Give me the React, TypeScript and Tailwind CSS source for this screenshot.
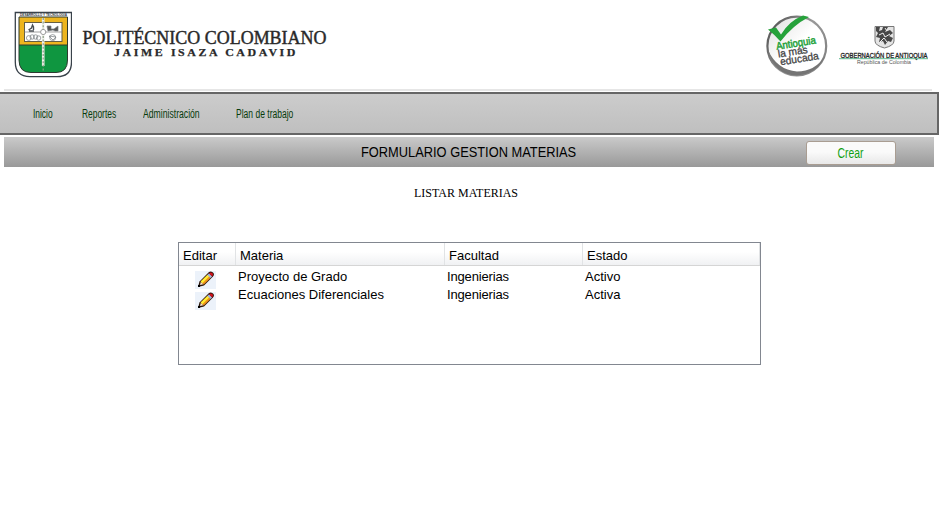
import React from "react";

function Shield() {
  return (
    <svg width="58" height="68" viewBox="14 11 58 68" className="block">
      <path d="M15.3 12.5H71.5V62Q71.5 76.6 57 76.6H30Q15.3 76.6 15.3 62Z" fill="#fff" stroke="#39424a" strokeWidth="1.3" />
      <path d="M19 17H67.5V45H19Z" fill="#edb51f" />
      <path d="M19 45H67.5V60Q67.5 72.5 56 72.5H31Q19 72.5 19 60Z" fill="#0f9640" />
      <path d="M19 17H67.5V60Q67.5 72.5 56 72.5H31Q19 72.5 19 60ZM19 45H67.5" fill="none" stroke="#2d3a30" strokeWidth="1" />
      <rect x="24.5" y="22.5" width="37.5" height="19" fill="#fff" stroke="#655f45" />
      <path d="M24.5 32H62" stroke="#888" strokeWidth="0.8" />
      <text x="20" y="16.4" fontSize="3.6" textLength="47" lengthAdjust="spacingAndGlyphs" fontWeight="bold" fill="#34383c" fontFamily="Liberation Sans, sans-serif">DESARROLLO Y TECNOLOGIA</text>
      <g fill="none" stroke="#777c80" strokeWidth="0.7">
        <path d="M28.5 30l3-2 1-3 1 2v3M29 31h5" stroke="#4a4f54" strokeWidth="1.4" />
        <path d="M47 26h4v3h3l4-3v5h-3l-2-1-5 1z" fill="#555" />
        <circle cx="28.8" cy="38" r="2.4" />
        <circle cx="32.2" cy="37" r="2.2" />
        <circle cx="35.6" cy="37" r="2.2" />
        <circle cx="38.6" cy="38" r="2.2" />
        <circle cx="52.7" cy="37.6" r="3" />
        <path d="M49 36l7 1-3 3z" />
      </g>
      <path d="M43.2 18V66" stroke="#eef1e8" strokeWidth="2.6" />
      <path d="M43.2 18V71" stroke="#8a9b86" strokeWidth="1.2" strokeDasharray="2 1.6" />
      <circle cx="43.2" cy="32" r="2.6" fill="#fff" stroke="#888" strokeWidth="0.8" />
    </svg>
  );
}

function Antioquia() {
  return (
    <svg width="70" height="68" viewBox="762 12 70 68" className="block">
      <defs>
        <linearGradient id="ring" x1="0" y1="0" x2="1" y2="0.6">
          <stop offset="0" stopColor="#4a4a4a" />
          <stop offset="0.6" stopColor="#999" />
          <stop offset="1" stopColor="#858585" />
        </linearGradient>
        <linearGradient id="face" x1="0" y1="0" x2="1" y2="1">
          <stop offset="0" stopColor="#dedede" />
          <stop offset="0.5" stopColor="#fff" />
        </linearGradient>
      </defs>
      <circle cx="796.8" cy="46" r="29.4" fill="url(#face)" stroke="url(#ring)" strokeWidth="2.2" />
      <path d="M768 50Q774 75 797 75.5Q817 74 825 56Q815 71.5 797 71.5Q777 70 768 50Z" fill="#747474" />
      <path d="M768 29.5L776 27.5L781 34.5Q789 21 803 15.5L809 17Q793 25 780.5 41.5Q775 35 768 29.5Z" fill="#26a23b" />
      <g transform="rotate(-9 797 47)" fontFamily="Liberation Sans, sans-serif" fontSize="10.5">
        <text x="776.5" y="46.5" textLength="40" lengthAdjust="spacingAndGlyphs" fill="#25a23b" stroke="#25a23b" strokeWidth="0.5">Antioquia</text>
        <text x="777" y="54.5" textLength="30" lengthAdjust="spacingAndGlyphs" fill="#444" stroke="#444" strokeWidth="0.3">la más</text>
        <text x="778" y="62.5" textLength="39" lengthAdjust="spacingAndGlyphs" fill="#444" stroke="#444" strokeWidth="0.3">educada</text>
      </g>
    </svg>
  );
}

function Gobernacion() {
  return (
    <svg width="92" height="44" viewBox="838 24 92 44" className="block">
      <path d="M875 26.5H894V41Q894 45.5 884.5 48Q875 45.5 875 41Z" fill="#e4e4e4" stroke="#777" />
      <path d="M876 27h4l-1 4 3-1 1-3h5l-3 5 5-2 3 3-4 3 4 2-2 4-3-1-3 4-2-4-4 1 1-4-4-1 2-4-2-2z" fill="#484848" />
      <path d="M879 35l4-2 2 4 5-3M880 42l4-4 3 4M885 28l2 3" fill="none" stroke="#f0f0f0" />
      <text x="840.5" y="57.6" fontSize="7" textLength="87" lengthAdjust="spacingAndGlyphs" fill="#222" stroke="#222" strokeWidth="0.3" fontFamily="Liberation Sans, sans-serif">GOBERNACIÓN DE ANTIOQUIA</text>
      <path d="M839 58.7H928" stroke="#37a774" strokeWidth="0.8" />
      <text x="857" y="64.3" fontSize="5.6" textLength="54" lengthAdjust="spacingAndGlyphs" fill="#555" fontFamily="Liberation Sans, sans-serif">República de Colombia</text>
    </svg>
  );
}

function Pencil() {
  return (
    <svg width="21" height="18" viewBox="0 0 21 18" className="block bg-[#ecf2fa]">
      <path d="M3 16L4.5 10.5L14 1Q16.5 -0.5 18.5 2Q19.5 4 18 5.5L9 14.5Z" fill="#2a1508" />
      <path d="M5 14L5.8 10.8L8.6 13.2Z" fill="#fbe0c8" />
      <path d="M5.7 10.6L12.6 3.7L15.8 6.8L8.8 13.6Z" fill="#f0921c" />
      <path d="M5.7 10.6L12.6 3.7L14.3 5.3L7.3 12.2Z" fill="#ffee32" />
      <path d="M12.4 3.9L14 2.3L17.1 5.4L15.6 6.9Z" fill="#a3b4dc" />
      <path d="M14 2.3Q15.8 0.7 17.6 2.2Q18.6 3.8 17.1 5.4Z" fill="#d5121c" />
      <path d="M3 14H5V16H3Z" fill="#000" />
    </svg>
  );
}

const columns = [
  { label: "Editar", width: "w-[57px]" },
  { label: "Materia", width: "w-[209px]" },
  { label: "Facultad", width: "w-[138px]" },
  { label: "Estado", width: "w-[177px]" },
];

const rows = [
  ["Proyecto de Grado", "Ingenierias", "Activo"],
  ["Ecuaciones Diferenciales", "Ingenierias", "Activa"],
];

export default function App() {
  return (
    <div className="h-[520px] w-[940px] overflow-hidden bg-white font-['Liberation_Sans',sans-serif] text-black">
      <header className="flex h-[92px] flex-col">
        <div className="flex h-[89px] shrink-0 items-start pl-[14px]">
          <div className="pt-[11px]"><Shield /></div>
          <svg width="250" height="40" viewBox="80 22 250 40" className="mt-[22px] ml-2 block" fontFamily="Liberation Serif, serif" fill="#292929">
            <text x="82.5" y="44" fontSize="19" textLength="244" lengthAdjust="spacingAndGlyphs" stroke="#292929" strokeWidth="0.45">POLITÉCNICO COLOMBIANO</text>
            <text x="114" y="56" fontSize="11" fontWeight="bold" letterSpacing="2.4" textLength="184" lengthAdjust="spacingAndGlyphs" stroke="#292929" strokeWidth="0.25">JAIME ISAZA CADAVID</text>
          </svg>
          <div className="ml-[432px] pt-3"><Antioquia /></div>
          <div className="ml-[6px] pt-6"><Gobernacion /></div>
        </div>
        <div className="mr-[8px] ml-[4px] h-[2px] bg-[#e6e6e6]" />
      </header>

      <nav className="flex h-[43px] w-[939px] border-y-2 border-r-2 border-[#666] bg-linear-to-b from-[#cccccc] to-[#bfbfbf] pl-[33px] text-[12px] leading-[40px] whitespace-nowrap text-[#073b0c]">
        <a className="w-[49px]"><span className="inline-block origin-left scale-x-[0.7]">Inicio</span></a>
        <a className="w-[61px]"><span className="inline-block origin-left scale-x-[0.7]">Reportes</span></a>
        <a className="w-[93px]"><span className="inline-block origin-left scale-x-[0.72]">Administración</span></a>
        <a className="w-[60px]"><span className="inline-block origin-left scale-x-[0.71]">Plan de trabajo</span></a>
      </nav>

      <div className="mt-[2px] ml-1 flex h-[30px] w-[930px] items-start bg-linear-to-b from-[#cacaca] to-[#999]">
        <h1 className="ml-[357px] w-[445px] text-[14px] leading-[31px] whitespace-nowrap"><span className="inline-block origin-left scale-x-[0.917]">FORMULARIO GESTION MATERIAS</span></h1>
        <button className="mt-1 h-6 w-[90px] rounded-[3px] border border-[#a99d92] bg-linear-to-b from-[#fafafa] from-45% to-[#e8e8e8] text-[14px] leading-[22px] text-[#12a012]">
          <span className="inline-block scale-x-[0.74]">Crear</span>
        </button>
      </div>

      <h2 className="mt-[16px] ml-[414px] font-['Liberation_Serif',serif] text-[12px] leading-5 whitespace-nowrap">LISTAR MATERIAS</h2>

      <div className="mt-[39px] ml-[178px] h-[123px] w-[583px] border border-[#828790] text-[13px]">
        <div className="flex h-[23px] border-b border-[#d5d5d5] bg-linear-to-b from-white from-40% to-[#f0f1f3]">
          {columns.map((c) => (
            <div key={c.label} className={`${c.width} border-r border-[#e1e3e5] pl-1 leading-[26px]`}>{c.label}</div>
          ))}
        </div>
        <div className="flex">
          <div className="flex w-[57px] flex-col gap-[3px] pt-[5px] pl-4"><Pencil /><Pencil /></div>
          <div className="pt-[2px]">
            {rows.map((r) => (
              <div key={r[0]} className="flex h-[18px] leading-[18px] whitespace-nowrap">
                <span className="w-[209px] pl-[2px]">{r[0]}</span>
                <span className="w-[138px] pl-[2px] tracking-[-0.15px]">{r[1]}</span>
                <span className="pl-[2px]">{r[2]}</span>
              </div>
            ))}
          </div>
        </div>
      </div>
    </div>
  );
}
